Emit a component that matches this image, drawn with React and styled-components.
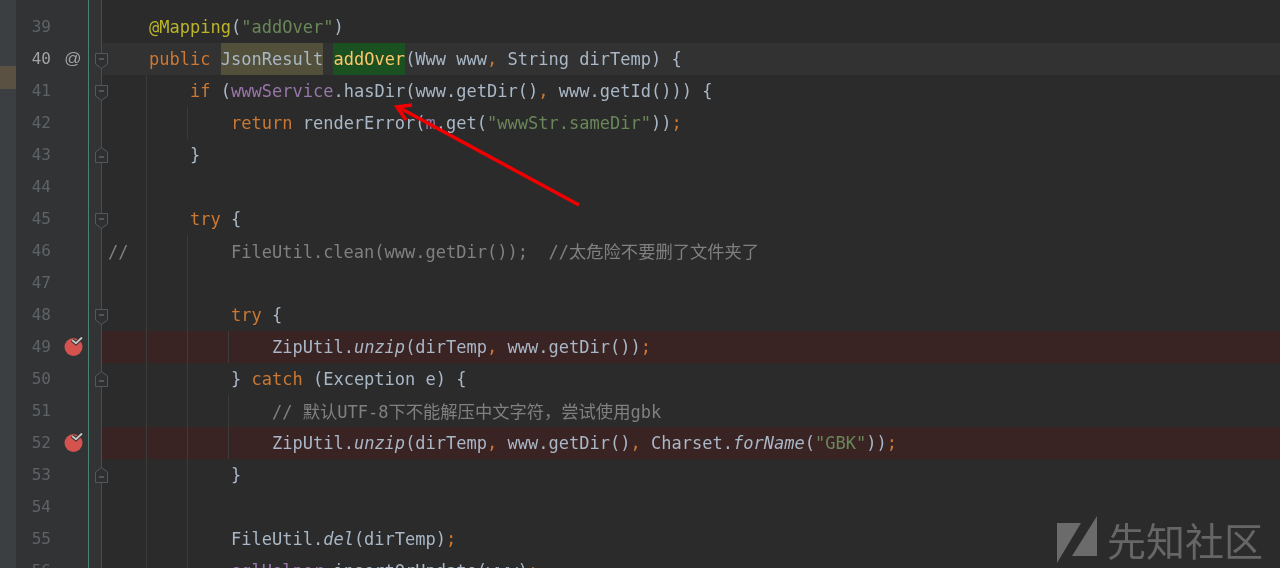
import React from "react";
import styled, { createGlobalStyle } from "styled-components";

const GlobalStyle = createGlobalStyle`
  html, body {
    margin: 0;
    height: 100%;
    overflow: hidden;
    background: #2b2b2b;
  }
`;

const Page = styled.div`
  position: relative;
  display: flex;
  width: 1280px;
  height: 568px;
  overflow: hidden;
  filter: blur(0.5px);
`;

const Strip = styled.div`
  flex: 0 0 16px;
  padding-top: 66px;
  background: #3b3f42;
`;

const StripMark = styled.div`
  height: 23px;
  background: #5a5143;
`;

const Lines = styled.div`
  flex: 1;
  margin-top: -21px;
`;

const Row = styled.div`
  display: flex;
  height: 32px;
`;

const Gutter = styled.div`
  flex: 0 0 72px;
  display: flex;
  align-items: center;
  background: #313335;
  border-right: 1px solid #4d7f73;
`;

const LineNo = styled.span`
  width: 35px;
  text-align: right;
  font: 16px/32px "DejaVu Sans Mono", monospace;
  color: ${(p) => (p.$current ? "#a4a3a3" : "#606366")};
`;

const Mark = styled.span`
  flex: 1;
  display: flex;
  justify-content: center;
  padding-left: 7px;
  font: 17px/30px "Liberation Sans", sans-serif;
  color: #a4a3a3;
`;

const FoldCell = styled.div`
  position: relative;
  flex: 0 0 12px;
  background: #313335;
  border-right: 1px solid #4a4c4d;
`;

const FoldMark = styled.svg`
  position: absolute;
  left: 6px;
  top: ${(p) => (p.$up ? "8px" : "10px")};
  width: 13px;
  height: 16px;
`;

const guideImage = (n) =>
  Array.from({ length: n }, () => "linear-gradient(#3b3b3b, #3b3b3b)").join(",") || "none";
const guidePos = (n) =>
  Array.from({ length: n }, (_, i) => `${44 + i * 41}px 0`).join(",") || "0 0";

const Code = styled.div`
  flex: 1;
  padding-left: 6px;
  white-space: pre;
  font: 17.03px/32px "DejaVu Sans Mono", "Noto Sans CJK SC", monospace;
  color: #a9b7c6;
  background-color: ${(p) => (p.$kind === "current" ? "#323232" : p.$kind === "break" ? "#3a2323" : "#2b2b2b")};
  background-image: ${(p) => guideImage(p.$guides || 0)};
  background-position: ${(p) => guidePos(p.$guides || 0)};
  background-size: 1px 100%;
  background-repeat: no-repeat;
`;

const Kw = styled.span`
  color: #cc7832;
`;
const Str = styled.span`
  color: #6a8759;
`;
const Annot = styled.span`
  color: #bbb529;
`;
const Field = styled.span`
  color: #9876aa;
`;
const Comment = styled.span`
  color: #808080;
`;
const Cjk = styled.span`
  font-family: "Noto Sans CJK SC", sans-serif;
  font-size: 17.3px;
`;
const Static = styled.span`
  font-style: italic;
`;
const TypeMatch = styled.span`
  display: inline-block;
  height: 32px;
  background: #52503a;
`;
const MethodMatch = styled.span`
  display: inline-block;
  height: 32px;
  background: #1b5020;
  color: #ffc66d;
`;

const Arrow = styled.svg`
  position: absolute;
  left: 0;
  top: 0;
  width: 1280px;
  height: 568px;
  pointer-events: none;
`;

const Watermark = styled.div`
  position: absolute;
  right: 17px;
  bottom: 5px;
  display: flex;
  align-items: center;
  gap: 10px;
  color: #666666;
  font: 400 39px/47px "Noto Sans CJK SC", sans-serif;
`;

const LogoMark = styled.svg`
  width: 40px;
  height: 47px;
`;

function Breakpoint() {
  return (
    <svg width="20" height="20" viewBox="0 0 20 20">
      <circle cx="10.5" cy="10" r="9" fill="#d4534e" />
      <path d="M9 3 L13 6.2 L19 .5" fill="none" stroke="#2b2b2b" strokeWidth="3.8" />
      <path d="M9 3 L13 6.2 L19 .5" fill="none" stroke="#c4c4c4" strokeWidth="2" />
    </svg>
  );
}

function Fold({ up }) {
  return (
    <FoldMark $up={up} viewBox="0 0 13 16">
      <path
        d={up ? "M.5 15.5V5L6.5.5 12.5 5V15.5Z" : "M.5.5H12.5V11L6.5 15.5.5 11Z"}
        fill="#2f3032"
        stroke="#55585a"
      />
      <path d={up ? "M4 10H9" : "M4 6H9"} stroke="#7a7d7f" />
    </FoldMark>
  );
}

const rows = [
  { n: 38 },
  { n: 39, code: <>{"    "}<Annot>@Mapping</Annot>(<Str>"addOver"</Str>)</> },
  {
    n: 40,
    kind: "current",
    mark: "at",
    fold: "down",
    code: (
      <>
        {"    "}<Kw>public</Kw> <TypeMatch>JsonResult</TypeMatch> <MethodMatch>addOver</MethodMatch>(Www www<Kw>,</Kw> String dirTemp) {"{"}
      </>
    ),
  },
  {
    n: 41,
    guides: 1,
    fold: "down",
    code: <>{"        "}<Kw>if</Kw> (<Field>wwwService</Field>.hasDir(www.getDir()<Kw>,</Kw> www.getId())) {"{"}</>,
  },
  {
    n: 42,
    guides: 2,
    code: <>{"            "}<Kw>return</Kw> renderError(<Field>m</Field>.get(<Str>"wwwStr.sameDir"</Str>))<Kw>;</Kw></>,
  },
  { n: 43, guides: 1, fold: "up", code: <>{"        }"}</> },
  { n: 44, guides: 1 },
  { n: 45, guides: 1, fold: "down", code: <>{"        "}<Kw>try</Kw> {"{"}</> },
  {
    n: 46,
    guides: 2,
    code: <Comment>{"//          FileUtil.clean(www.getDir());  //"}<Cjk>太危险不要删了文件夹了</Cjk></Comment>,
  },
  { n: 47, guides: 2 },
  { n: 48, guides: 2, fold: "down", code: <>{"            "}<Kw>try</Kw> {"{"}</> },
  {
    n: 49,
    guides: 3,
    kind: "break",
    mark: "break",
    code: <>{"                "}ZipUtil.<Static>unzip</Static>(dirTemp<Kw>,</Kw> www.getDir())<Kw>;</Kw></>,
  },
  { n: 50, guides: 2, fold: "up", code: <>{"            } "}<Kw>catch</Kw> (Exception e) {"{"}</> },
  {
    n: 51,
    guides: 3,
    code: <Comment>{"                // "}<Cjk>默认</Cjk>UTF-8<Cjk>下不能解压中文字符，尝试使用</Cjk>gbk</Comment>,
  },
  {
    n: 52,
    guides: 3,
    kind: "break",
    mark: "break",
    code: (
      <>
        {"                "}ZipUtil.<Static>unzip</Static>(dirTemp<Kw>,</Kw> www.getDir()<Kw>,</Kw> Charset.<Static>forName</Static>(<Str>"GBK"</Str>))<Kw>;</Kw>
      </>
    ),
  },
  { n: 53, guides: 2, fold: "up", code: <>{"            }"}</> },
  { n: 54, guides: 2 },
  { n: 55, guides: 2, code: <>{"            "}FileUtil.<Static>del</Static>(dirTemp)<Kw>;</Kw></> },
  { n: 56, guides: 2, code: <>{"            "}<Field>sqlHelper</Field>.insertOrUpdate(www)<Kw>;</Kw></> },
];

export default function App() {
  return (
    <>
      <GlobalStyle />
      <Page>
        <Strip>
          <StripMark />
        </Strip>
        <Lines>
          {rows.map((row) => (
            <Row key={row.n}>
              <Gutter>
                <LineNo $current={row.kind === "current"}>{row.n}</LineNo>
                <Mark>
                  {row.mark === "at" && "@"}
                  {row.mark === "break" && <Breakpoint />}
                </Mark>
              </Gutter>
              <FoldCell>{row.fold && <Fold up={row.fold === "up"} />}</FoldCell>
              <Code $kind={row.kind} $guides={row.guides}>{row.code}</Code>
            </Row>
          ))}
        </Lines>
        <Arrow viewBox="0 0 1280 568">
          <path d="M579 205 L398 107" fill="none" stroke="#f00000" strokeWidth="3.6" />
          <path d="M412 105 L397 107 L406 120" fill="none" stroke="#f00000" strokeWidth="3.6" />
        </Arrow>
        <Watermark>
          <LogoMark viewBox="0 0 40 47">
            <path d="M0 7H24L0 47Z" fill="#6b6b6b" />
            <path d="M40 0V40H15Z" fill="#6b6b6b" />
          </LogoMark>
          先知社区
        </Watermark>
      </Page>
    </>
  );
}
